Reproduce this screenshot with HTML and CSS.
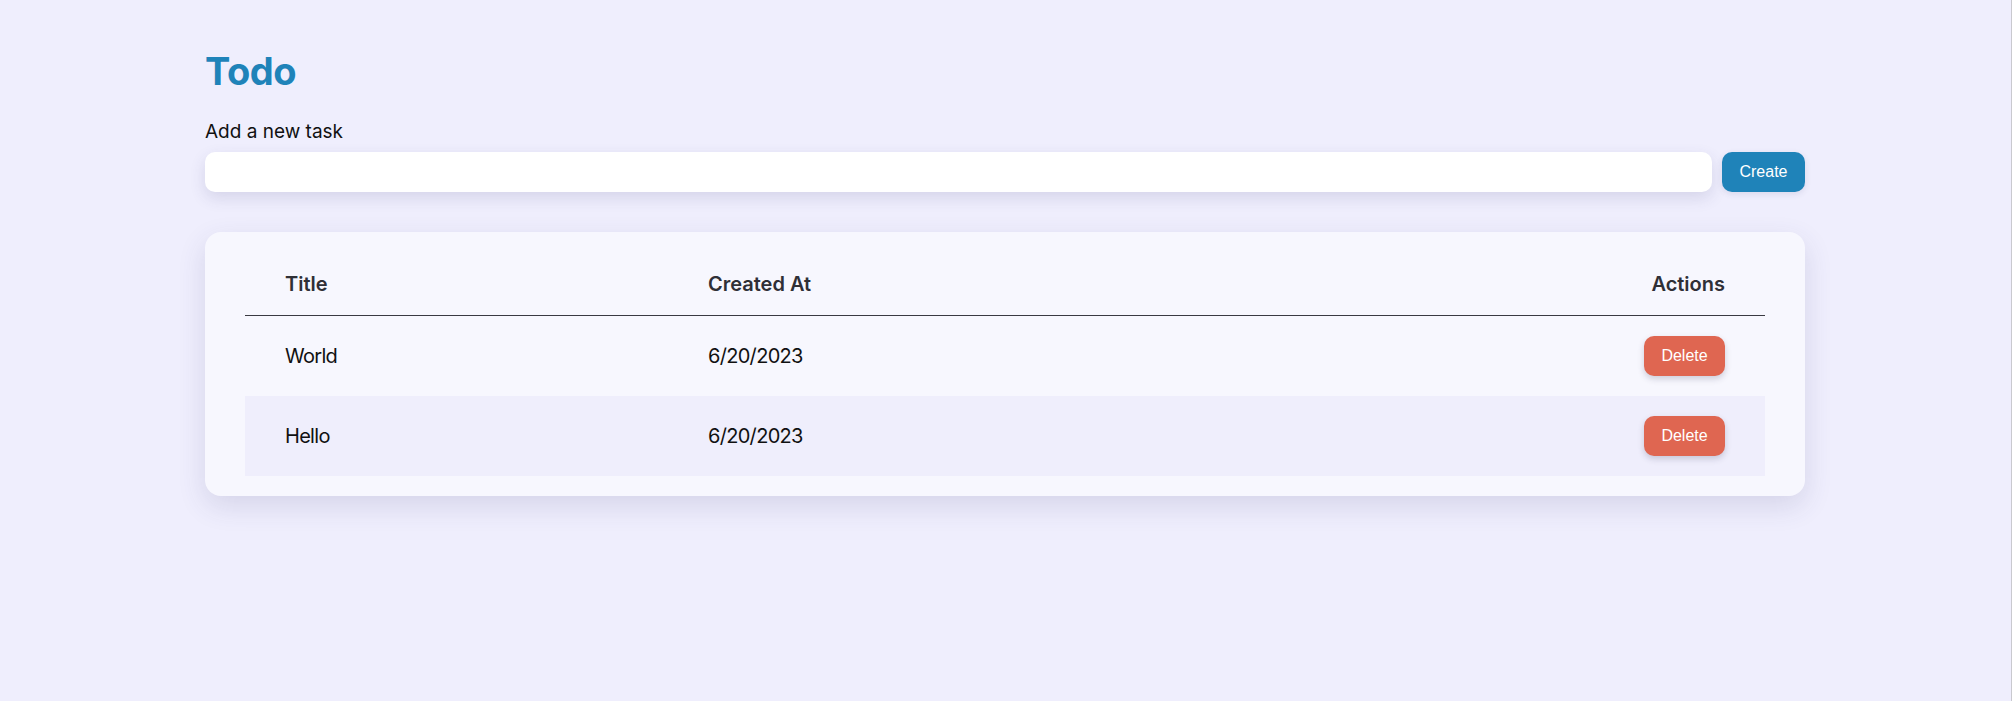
FILE: index.html
```html
<!DOCTYPE html>
<html>
<head>
<meta charset="utf-8">
<title>Todo</title>
<link rel="stylesheet" href="styles.css">
</head>
<body>
<main class="container">
  <h1 class="title">Todo</h1>
  <form class="new-task">
    <label class="new-task-label" for="task">Add a new task</label>
    <div class="new-task-row">
      <input class="new-task-input" id="task" type="text">
      <button class="btn btn-create" type="button">Create</button>
    </div>
  </form>
  <section class="card">
    <table class="tasks">
      <thead>
        <tr>
          <th class="col-title">Title</th>
          <th class="col-date">Created At</th>
          <th class="col-actions">Actions</th>
        </tr>
      </thead>
      <tbody>
        <tr>
          <td>World</td>
          <td>6/20/2023</td>
          <td class="cell-actions"><button class="btn btn-delete" type="button">Delete</button></td>
        </tr>
        <tr class="alt">
          <td>Hello</td>
          <td>6/20/2023</td>
          <td class="cell-actions"><button class="btn btn-delete" type="button">Delete</button></td>
        </tr>
      </tbody>
    </table>
  </section>
</main>
</body>
</html>
```

FILE: styles.css
```css
html, body {
  margin: 0;
  padding: 0;
}
body {
  background: #efeefd;
  font-family: Inter, "Noto Sans", sans-serif;
  color: #111;
  border-right: 1px solid #c9c9cf;
  min-height: 701px;
  box-sizing: border-box;
}
.container {
  width: 1600px;
  margin: 0 0 0 205px;
  padding-top: 47px;
}
.title {
  margin: 0;
  font-size: 38px;
  line-height: 48px;
  font-weight: 700;
  color: #1f83b9;
  letter-spacing: -0.5px;
}
.new-task {
  margin-top: 26px;
}
.new-task-label {
  display: block;
  font-size: 19px;
  line-height: 22px;
  color: #111;
  margin-bottom: 9px;
}
.new-task-row {
  display: flex;
  gap: 10px;
}
.new-task-input {
  flex: 1;
  height: 40px;
  box-sizing: border-box;
  border: none;
  border-radius: 10px;
  background: #fff;
  box-shadow: 0 6px 16px rgba(60, 60, 110, 0.14);
  outline: none;
  padding: 0 12px;
  font-size: 16px;
}
.btn {
  height: 40px;
  border: none;
  border-radius: 10px;
  padding: 0 17px;
  font-family: "Liberation Sans", Arial, sans-serif;
  font-size: 16px;
  color: #fff;
  cursor: pointer;
}
.btn-create {
  width: 83px;
  background: #1f83b9;
  box-shadow: 0 2px 6px rgba(60, 60, 110, 0.12);
}
.btn-delete {
  width: 81px;
  background: #df6651;
  box-shadow: 0 3px 6px rgba(60, 60, 90, 0.22);
}
.card {
  margin-top: 40px;
  background: #f7f7fe;
  border-radius: 16px;
  padding: 20px 40px;
  box-shadow: 0 10px 28px rgba(60, 60, 110, 0.14);
}
.tasks {
  width: 100%;
  border-collapse: collapse;
}
.tasks th {
  text-align: left;
  font-size: 20px;
  line-height: 24px;
  font-weight: 600;
  color: #2f2f36;
  padding: 20px 40px 19px;
  border-bottom: 1px solid #3a3a42;
}
.tasks td {
  font-size: 20px;
  line-height: 24px;
  letter-spacing: -0.7px;
  padding: 20px 40px;
  color: #111;
  height: 40px;
  box-sizing: content-box;
}
.col-title {
  width: 343px;
}
.tasks th.col-actions {
  text-align: right;
  width: 81px;
}
.cell-actions {
  text-align: right;
}
.tasks td.cell-actions {
  letter-spacing: normal;
}
.tasks tbody td {
  vertical-align: middle;
}
.tasks tr.alt {
  background: #efeefc;
}
```
